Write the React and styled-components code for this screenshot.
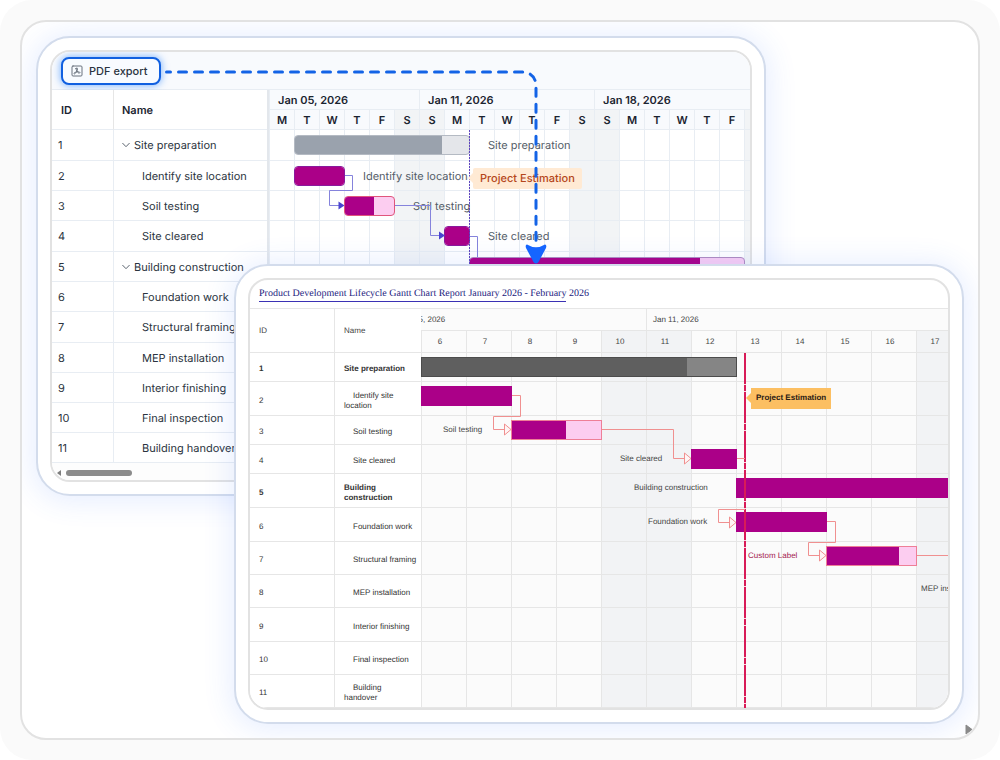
import React from 'react';
import styled, { createGlobalStyle, css, ThemeProvider } from 'styled-components';

const GlobalStyle = createGlobalStyle`
* {
    box-sizing: border-box;
}
body {
    margin: 0;
    background: #ffffff;
    text-rendering: geometricPrecision;
}
`

const boardTheme = {
    font: '"Inter", "Liberation Sans", sans-serif',
    size: '11px',
    text: '#2b3440',
    heading: '#1b2430',
    headingWeight: 600,
    line: '#e8edf3',
    cell: '#ffffff',
    head: '#f8fafd',
    weekend: '#f2f4f6',
    tier: '20px',
    day: 25,
    label: '#545d68',
    radius: '4px',
    barTop: '5px',
    barHeight: '20px',
    labelLine: '30px',
}

const reportTheme = {
    font: '"Liberation Sans", Arial, sans-serif',
    size: '8px',
    text: '#333333',
    heading: '#444444',
    headingWeight: 400,
    line: '#e6e6e6',
    cell: '#fbfbfb',
    head: '#fbfbfb',
    weekend: '#f2f3f5',
    tier: '22px',
    day: 45,
    label: '#444444',
    radius: '0px',
    barTop: '4px',
    barHeight: '20px',
    labelLine: '28px',
}

const Page = styled.main`
min-height: 760px;
padding: 20px;
display: flex;
background: #fafafa;
border-radius: 32px;
`

const Frame = styled.section`
position: relative;
flex: 1;
display: grid;
grid-template-columns: minmax(0, 1fr);
align-items: start;
border: 2px solid #e2e2e2;
border-radius: 26px;
background: #ffffff;
overflow: hidden;
`

const Card = styled.article`
grid-area: 1 / 1;
isolation: isolate;
padding: 12px;
border: 2px solid #d3dcec;
border-radius: 34px;
background: #ffffff;
box-shadow: 0 2px 28px 4px rgba(60, 115, 255, 0.12);
`

const BoardCard = styled(Card)`
margin: 14px 212px 0 14px;
`

const ReportCard = styled(Card)`
margin: 242px 14px 14px 212px;
`

const Panel = styled.div`
border: 2px solid #e2e2e2;
border-radius: 20px;
overflow: hidden;
background: #ffffff;
font-family: ${p => p.theme.font};
font-size: ${p => p.theme.size};
color: ${p => p.theme.text};
`

const Toolbar = styled.div`
height: 38px;
padding: 5px 9px;
background: #f8fafd;
border-bottom: 1px solid #e8edf3;
`

const ExportButton = styled.button`
display: flex;
align-items: center;
gap: 6px;
width: 100px;
height: 28px;
padding: 0 8px;
border: 2px solid #1160e0;
border-radius: 8px;
background: #f8fbff;
box-shadow: 0 0 7px 1px rgba(30, 125, 255, 0.5);
font-family: inherit;
font-size: 11px;
font-weight: 500;
color: #2b3440;
white-space: nowrap;
`

const Split = styled.div`
display: flex;
`

const TaskTable = styled.table`
flex: none;
table-layout: fixed;
width: ${p => p.$width}px;
border-collapse: separate;
border-spacing: 0;
background: #ffffff;
`

const HeadCell = styled.th`
width: ${p => p.$width}px;
height: ${p => p.$height}px;
padding: 0 0 0 ${p => p.$pad}px;
text-align: left;
font-weight: ${p => p.theme.headingWeight};
color: ${p => p.theme.heading};
border-bottom: 1px solid ${p => p.theme.line};
& + & {
    border-left: 1px solid ${p => p.theme.line};
}
`

const TaskRow = styled.tr`
height: ${p => p.$height}px;
font-weight: ${p => p.$strong ? 700 : 400};
`

const IdCell = styled.td`
padding: 0 0 0 6px;
border-bottom: 1px solid ${p => p.theme.line};
`

const ReportIdCell = styled(IdCell)`
padding: 3px 0 0 9px;
`

const NameCell = styled.td`
padding: 0 0 0 8px;
border-left: 1px solid ${p => p.theme.line};
border-bottom: 1px solid ${p => p.theme.line};
white-space: nowrap;
`

const ReportNameCell = styled(NameCell)`
padding: 4px 0 0 9px;
line-height: 10px;
text-indent: ${p => p.$child ? 9 : 0}px;
white-space: pre-line;
`

const Indent = styled.span`
display: inline-flex;
align-items: center;
gap: 4px;
padding-left: ${p => p.$child ? 20 : 0}px;
`

const Chart = styled.div`
flex: 1;
min-width: 0;
overflow: hidden;
border-left: ${p => p.$divider}px solid #e3e7ec;
`

const Scroller = styled.div`
margin-left: ${p => -p.$scrolled}px;
`

const Tier = styled.div`
display: flex;
height: ${p => p.theme.tier};
background: ${p => p.theme.head};
color: ${p => p.theme.heading};
font-weight: ${p => p.theme.headingWeight};
border-bottom: 1px solid ${p => p.theme.line};
`

const Week = styled.div`
flex: ${p => p.$last ? '1 0 auto' : '0 0 auto'};
display: flex;
align-items: center;
width: ${p => p.$days * p.theme.day}px;
padding-left: ${p => p.$pad}px;
border-left: 1px solid ${p => p.theme.line};
white-space: nowrap;
`

const cell = css`
flex: 0 0 ${p => p.theme.day}px;
border-left: 1px solid ${p => p.theme.line};
`

const Day = styled.div`
${cell}
display: flex;
align-items: center;
justify-content: center;
padding-right: ${p => p.$shift}px;
background: ${p => p.$off ? p.theme.weekend : 'transparent'};
`

const Body = styled.div`
position: relative;
margin-left: ${p => p.$scrolled}px;
`

const Lane = styled.div`
position: relative;
display: flex;
height: ${p => p.$height}px;
background: ${p => p.theme.cell};
border-bottom: 1px solid ${p => p.theme.line};
`

const LaneCell = styled.div`
${cell}
background: ${p => p.$off ? p.theme.weekend : 'transparent'};
`

const barTones = {
    grey: { fill: '#9aa2ad', rest: '#e4e6ea', edge: '#b4bac3' },
    slate: { fill: '#5f5f5f', rest: '#858585', edge: '#4c4c4c' },
    purple: { fill: '#ab0088', rest: '#ab0088', edge: '#8a1a9c' },
    plum: { fill: '#ab0088', rest: '#ab0088', edge: '#ab0088' },
    pink: { fill: '#ab0088', rest: '#fccdf0', edge: '#e0557c' },
    rose: { fill: '#ab0088', rest: '#fccdf0', edge: '#ee7f97' },
    blush: { fill: '#ab0088', rest: '#f8cdf3', edge: '#b08cc0' },
}

const Bar = styled.div`
position: absolute;
top: ${p => p.theme.barTop};
left: ${p => p.$x}px;
width: ${p => p.$w}px;
height: ${p => p.theme.barHeight};
border: 1px solid ${p => barTones[p.$tone].edge};
border-radius: ${p => p.theme.radius};
background: ${p => barTones[p.$tone].rest};
overflow: hidden;
&::before {
    content: "";
    display: block;
    width: ${p => p.$done}px;
    height: 100%;
    background: ${p => barTones[p.$tone].fill};
}
`

const BarLabel = styled.span`
position: absolute;
top: 0;
left: ${p => p.$x}px;
line-height: ${p => p.theme.labelLine};
white-space: nowrap;
color: ${p => p.$color || p.theme.label};
`

const Links = styled.svg`
position: absolute;
top: 0;
left: 0;
width: 100%;
height: 100%;
overflow: visible;
pointer-events: none;
`

const Marker = styled.div`
position: absolute;
top: 0;
bottom: 0;
left: ${p => p.$x}px;
width: ${p => p.$w}px;
background: repeating-linear-gradient(${p => p.$pattern});
`

const Tag = styled.span`
position: absolute;
top: ${p => p.$y}px;
left: ${p => p.$x}px;
height: 21px;
padding: 0 ${p => p.$pad}px;
border-radius: ${p => p.$round}px;
line-height: ${p => p.$lh}px;
font-weight: ${p => p.$weight};
color: ${p => p.$color};
background: ${p => p.$bg};
white-space: nowrap;
&::before {
    content: "";
    position: absolute;
    top: 5px;
    left: -5px;
    border: 5px solid transparent;
    border-left-width: 0;
    border-right-color: ${p => p.$bg};
}
`

const ScrollTrack = styled.div`
display: flex;
align-items: center;
gap: 5px;
height: 17px;
padding: 2px 5px 0;
background: #fdfdfd;
`

const ScrollThumb = styled.div`
width: 66px;
height: 6px;
border-radius: 3px;
background: #8b8b8b;
`

const ReportTitle = styled.h1`
margin: 0;
height: 29px;
padding: 7px 9px 0;
border-bottom: 1px solid #e6e6e6;
font-family: "Liberation Serif", "Times New Roman", serif;
font-size: 10px;
font-weight: 400;
line-height: 14px;
color: #1c1c80;
white-space: nowrap;
`

const Underlined = styled.span`
display: inline-block;
border-bottom: 1px solid #3b31b4;
`

const FlowArrow = styled.svg`
position: absolute;
top: 0;
left: 0;
width: 100%;
height: 260px;
pointer-events: none;
`

const CornerArrow = styled.svg`
position: absolute;
right: 5px;
bottom: 3px;
`

const PdfIcon = () => (
    <svg width="12" height="12" viewBox="0 0 12 12" fill="none" stroke="#68717c" strokeLinejoin="round" strokeLinecap="round">
        <rect x="1" y="1" width="10" height="10" rx="1" strokeWidth="1" />
        <path d="M5 3.500C5 2.600 6.600 2.600 6.500 3.700C6.400 5.500 5 8 3.800 8.800C3 9.200 2.600 8.300 3.400 7.700C4.800 6.800 7.200 6.500 8.500 7C9.300 7.500 8.700 8.500 7.800 8.100C6.600 7.500 5.100 5.200 5 3.500z" strokeWidth="1" />
    </svg>
)

const Chevron = () => (
    <svg width="8" height="8" viewBox="0 0 8 8" fill="none" stroke="#5c6570" strokeLinecap="round" strokeLinejoin="round">
        <path d="M0.700 2.300L4 5.700L7.300 2.300" />
    </svg>
)

const tasks = [
    { id: 1, name: 'Site preparation', group: true },
    { id: 2, name: 'Identify site location', wrapped: 'Identify site\nlocation' },
    { id: 3, name: 'Soil testing' },
    { id: 4, name: 'Site cleared' },
    { id: 5, name: 'Building construction', wrapped: 'Building\nconstruction', group: true },
    { id: 6, name: 'Foundation work' },
    { id: 7, name: 'Structural framing' },
    { id: 8, name: 'MEP installation' },
    { id: 9, name: 'Interior finishing' },
    { id: 10, name: 'Final inspection' },
    { id: 11, name: 'Building handover', wrapped: 'Building\nhandover' },
]

const board = {
    heights: [31, 30, 30, 31, 30, 30, 31, 30, 30, 30, 30],
    weeks: [
        { label: 'Jan 05, 2026', days: 6, pad: 8 },
        { label: 'Jan 11, 2026', days: 7, pad: 8 },
        { label: 'Jan 18, 2026', days: 7, pad: 8 },
    ],
    days: ['M', 'T', 'W', 'T', 'F', 'S', 'S', 'M', 'T', 'W', 'T', 'F', 'S', 'S', 'M', 'T', 'W', 'T', 'F', ''],
    off: [5, 6, 12, 13, 19],
    bars: {
        1: { x: 25, w: 176, done: 147, tone: 'grey', labelX: 219 },
        2: { x: 25, w: 51, done: 51, tone: 'purple', labelX: 94 },
        3: { x: 75, w: 51, done: 29, tone: 'pink', labelX: 144 },
        4: { x: 175, w: 26, done: 26, tone: 'purple', labelX: 219 },
        5: { x: 200, w: 276, done: 230, tone: 'blush' },
    },
}

// the report view is scrolled by one day, bars are measured from its first visible day
const report = {
    heights: [29, 34, 29, 29, 34, 34, 33, 33, 34, 33, 33],
    weeks: [
        { label: 'Jan 05, 2026', days: 6, pad: 22 },
        { label: 'Jan 11, 2026', days: 7, pad: 6 },
    ],
    days: ['', 6, 7, 8, 9, 10, 11, 12, 13, 14, 15, 16, 17],
    off: [5, 6, 12],
    bars: {
        1: { x: 0, w: 316, done: 265, tone: 'slate' },
        2: { x: 0, w: 91, done: 91, tone: 'plum' },
        3: { x: 90, w: 91, done: 54, tone: 'rose', labelX: 22 },
        4: { x: 270, w: 46, done: 46, tone: 'plum', labelX: 199 },
        5: { x: 315, w: 260, done: 260, tone: 'plum', labelX: 213 },
        6: { x: 315, w: 91, done: 91, tone: 'plum', labelX: 227 },
        7: { x: 405, w: 91, done: 72, tone: 'rose', labelX: 327, label: 'Custom Label', color: '#a3204f' },
        8: { x: 585, w: 91, done: 91, tone: 'plum', labelX: 500 },
    },
}

function Timeline({ plan, divider, hidden, shift, children }) {
    return (
        <Chart $divider={divider}>
            <Scroller $scrolled={hidden * 45}>
                <Tier>
                    {plan.weeks.map((week, i) => (
                        <Week key={week.label} $days={week.days} $pad={week.pad} $last={i === plan.weeks.length - 1}>
                            {week.label}
                        </Week>
                    ))}
                </Tier>
                <Tier>
                    {plan.days.map((day, i) => (
                        <Day key={i} $off={plan.off.includes(i)} $shift={shift}>{day}</Day>
                    ))}
                </Tier>
                <Body $scrolled={hidden * 45}>
                    {tasks.map((task, row) => {
                        const bar = plan.bars[task.id]
                        return (
                            <Lane key={task.id} $height={plan.heights[row]}>
                                {plan.days.map((day, i) => i >= hidden && (
                                    <LaneCell key={i} $off={plan.off.includes(i)} />
                                ))}
                                {bar && <Bar $x={bar.x} $w={bar.w} $done={bar.done} $tone={bar.tone} />}
                                {bar && bar.labelX && (
                                    <BarLabel $x={bar.labelX} $color={bar.color}>
                                        {bar.label || task.name}
                                    </BarLabel>
                                )}
                            </Lane>
                        )
                    })}
                    {children}
                </Body>
            </Scroller>
        </Chart>
    )
}

function BoardView() {
    return (
        <ThemeProvider theme={boardTheme}>
            <BoardCard>
                <Panel>
                    <Toolbar>
                        <ExportButton type="button"><PdfIcon />PDF export</ExportButton>
                    </Toolbar>
                    <Split>
                        <TaskTable $width={215}>
                            <thead>
                                <tr>
                                    <HeadCell $width={61} $height={40} $pad={9}>ID</HeadCell>
                                    <HeadCell $height={40} $pad={8}>Name</HeadCell>
                                </tr>
                            </thead>
                            <tbody>
                                {tasks.map((task, row) => (
                                    <TaskRow key={task.id} $height={board.heights[row]}>
                                        <IdCell>{task.id}</IdCell>
                                        <NameCell>
                                            <Indent $child={!task.group}>
                                                {task.group && <Chevron />}
                                                {task.name}
                                            </Indent>
                                        </NameCell>
                                    </TaskRow>
                                ))}
                            </tbody>
                        </TaskTable>
                        <Timeline plan={board} divider={2} hidden={0} shift={0}>
                            <Links fill="none" stroke="#8583dc">
                                <path d="M76 45.500H83.500V60.500H60.500V75.500H70" />
                                <path d="M126 75.500H161.500V105.500H171" />
                                <path d="M201 106.500H208.500V127" />
                                <path d="M69.500 71.500L75.500 75.500L69.500 79.500z" fill="#4a44d0" stroke="none" />
                                <path d="M170 101.500L176 105.500L170 109.500z" fill="#4a44d0" stroke="none" />
                            </Links>
                            <Marker $x={200} $w={1} $pattern="#5f45c0 0 2px, transparent 2px 3px" />
                            <Tag $x={204} $y={38} $pad={7} $round={2} $lh={21} $weight={500} $color="#b5461a" $bg="#ffead4">
                                Project Estimation
                            </Tag>
                        </Timeline>
                    </Split>
                    <ScrollTrack>
                        <svg width="4" height="6" viewBox="0 0 4 6"><path d="M4 0L0 3L4 6z" fill="#7d7d7d" /></svg>
                        <ScrollThumb />
                    </ScrollTrack>
                </Panel>
            </BoardCard>
        </ThemeProvider>
    )
}

function ReportView() {
    return (
        <ThemeProvider theme={reportTheme}>
            <ReportCard>
                <Panel>
                    <ReportTitle>
                        <Underlined>Product Development Lifecycle Gantt Chart Report January 2026 - February</Underlined> 2026
                    </ReportTitle>
                    <Split>
                        <TaskTable $width={171}>
                            <thead>
                                <tr>
                                    <HeadCell $width={84} $height={44} $pad={9}>ID</HeadCell>
                                    <HeadCell $height={44} $pad={9}>Name</HeadCell>
                                </tr>
                            </thead>
                            <tbody>
                                {tasks.map((task, row) => (
                                    <TaskRow key={task.id} $height={report.heights[row]} $strong={task.group}>
                                        <ReportIdCell>{task.id}</ReportIdCell>
                                        <ReportNameCell $child={!task.group}>{task.wrapped || task.name}</ReportNameCell>
                                    </TaskRow>
                                ))}
                            </tbody>
                        </TaskTable>
                        <Timeline plan={report} divider={0} hidden={1} shift={8}>
                            <Marker
                                $x={323}
                                $w={2}
                                $pattern="#d81b58 0 31px, #ffd5e0 31px 32px, #d81b58 32px 38px, #ffd5e0 38px 39px"
                            />
                            <Links fill="none" stroke="#f09090">
                                <path d="M91 42.500H99.500V63.500H72.500V76.500H83" />
                                <path d="M181 76.500H252.500V105.500H263" />
                                <path d="M316 105.500H324" />
                                <path d="M324 156.500H297.500V169.500H308" />
                                <path d="M406 168.500H414.500V189.500H387.500V202.500H398" />
                                <path d="M496 202.500H555" />
                                <path d="M83.500 71L90 76.500L83.500 82z" fill="#fff4f4" />
                                <path d="M263.500 100L270 105.500L263.500 111z" fill="#fff4f4" />
                                <path d="M308.500 164L315 169.500L308.500 175z" fill="#fff4f4" />
                                <path d="M398.500 197L405 202.500L398.500 208z" fill="#fff4f4" />
                            </Links>
                            <Tag $x={330} $y={35} $pad={5} $round={0} $lh={19} $weight={700} $color="#2a2015" $bg="#fcbf62">
                                Project Estimation
                            </Tag>
                        </Timeline>
                    </Split>
                </Panel>
            </ReportCard>
        </ThemeProvider>
    )
}

export default function App() {
    return (
        <>
            <GlobalStyle />
            <Page>
                <Frame>
                    <BoardView />
                    <ReportView />
                    <FlowArrow fill="none">
                        <path
                            d="M144.500 50H499Q514 50 514 65V226"
                            stroke="#1363e6"
                            strokeWidth="3"
                            strokeLinecap="round"
                            strokeDasharray="8 8"
                            strokeDashoffset="4"
                        />
                        <path
                            d="M505 222.500Q514 228 523 222.500Q525 223 524 226L516.500 240Q514 243 511.500 240L504 226Q503 223 505 222.500z"
                            fill="#1565ff"
                        />
                    </FlowArrow>
                    <CornerArrow width="8" height="11" viewBox="0 0 8 11">
                        <path d="M1 1L7 5.500L1 10z" fill="#8a8a8a" stroke="#8a8a8a" strokeLinejoin="round" />
                    </CornerArrow>
                </Frame>
            </Page>
        </>
    )
}
